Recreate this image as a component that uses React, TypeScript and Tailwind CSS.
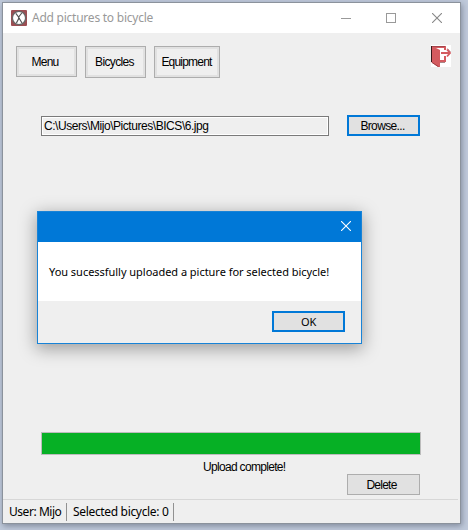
import type { ReactNode } from 'react';

const sans = "font-['Liberation_Sans',Arial,sans-serif] text-[12px] leading-[14px] text-black whitespace-pre";
const ui = "font-['Noto_Sans','Open_Sans',sans-serif] whitespace-pre";

function ToolButton({ className, children }: { className: string; children: ReactNode }) {
  return (
    <button className={`${sans} shrink-0 border border-[#adadad] bg-[#efefef] shadow-[inset_0_0_0_2px_#e1e1e1] ${className}`}>
      {children}
    </button>
  );
}

function AppIcon() {
  return (
    <svg width="16" height="16" viewBox="0 0 16 16" className="shrink-0">
      <rect width="16" height="16" rx="1" fill="#9c4d52" />
      <circle cx="8" cy="8" r="6.6" fill="#fff" stroke="#666" strokeWidth="1.3" />
      <path d="M4.8 3.4 7.6 7 10.8 3M8 8 5.4 13M8 8l3 5" fill="none" stroke="#555" strokeWidth="1.2" />
      <path d="M7.8 6.5v3" stroke="#555" />
    </svg>
  );
}

function ExitIcon() {
  return (
    <svg width="20" height="22" viewBox="0 0 20 22" className="shrink-0">
      <rect width="20" height="22" fill="#fff" />
      <path d="M0 1h15v4h-2V3H5l4 2v17H7L0 17z" fill="#d45b60" />
      <path d="M0 1.5h14" stroke="#a5444a" />
      <path d="M.5 1v16" stroke="#38191b" />
      <path d="M1 17.5 7.5 21.7" stroke="#8c3439" strokeWidth=".8" />
      <path d="M9 16h5v-5" fill="none" stroke="#d45b60" strokeWidth="2" />
      <path d="M9 17.5h5" stroke="#a88789" />
      <path d="M10 8h8" stroke="#d45b60" strokeWidth="2" />
      <path d="M16 4.5 19 8l-3 3.5" fill="none" stroke="#d45b60" strokeWidth="1.8" />
      <path d="m16.5 3.5 3 3.5" stroke="#934247" strokeWidth=".6" />
    </svg>
  );
}

function Cross({ color }: { color: string }) {
  return (
    <svg width="10" height="10" viewBox="0 0 10 10" className="shrink-0">
      <path d="m0 0 10 10M10 0 0 10" stroke={color} strokeWidth="1.1" />
    </svg>
  );
}

function TitleBar() {
  return (
    <header className="flex h-[30px] shrink-0 items-center bg-white pl-2 pr-[18px]">
      <AppIcon />
      <h1 className={`${ui} ml-[5px] text-[12px] tracking-[-0.24px] text-[#999]`}>Add pictures to bicycle</h1>
      <div className="ml-auto flex items-center gap-[35px]">
        <span className="h-px w-[10px] bg-[#999]" />
        <span className="h-[10px] w-[10px] border border-[#999]" />
        <span className="ml-[1px]"><Cross color="#888" /></span>
      </div>
    </header>
  );
}

function MessageDialog() {
  return (
    <section className="absolute left-[34px] top-[208px] flex h-[133px] w-[325px] flex-col border border-[#1883d7] bg-[#efefef] shadow-[0_4px_16px_1px_rgba(0,0,0,0.34)]">
      <div className="flex h-[30px] shrink-0 items-center justify-end bg-[#0078d7] pb-[2px] pr-[10px]">
        <Cross color="#fff" />
      </div>
      <div className="flex h-[59px] shrink-0 items-center bg-white pl-[11px] pt-[2px]">
        <p className={`${ui} text-[11px] tracking-[-0.03px] text-black`}>You sucessfully uploaded a picture for selected bicycle!</p>
      </div>
      <div className="flex justify-end pr-4 pt-[10px]">
        <button className={`${ui} h-[21px] w-[73px] border-2 border-[#0078d7] bg-[#e1e1e1] text-[11px] leading-[17px] tracking-[-0.3px] text-black`}>OK</button>
      </div>
    </section>
  );
}

export default function App() {
  return (
    <div className="h-[530px] w-[468px] overflow-hidden bg-[#c0cadb] pl-[2px] pt-[2px]">
      <main className="relative flex h-[522px] w-[459px] flex-col border border-[#8b929c] bg-[#efefef] shadow-[1px_2px_6px_rgba(40,50,70,0.42)]">
        <TitleBar />
        <nav className="flex h-[45px] shrink-0 items-start pl-[13px] pr-[9px] pt-3">
          <div className="mt-[1px] flex items-start gap-2">
            <ToolButton className="h-[31px] w-[61px] pr-[3px] tracking-[-0.8px]">Menu</ToolButton>
            <ToolButton className="h-8 w-[61px] pr-[2px] tracking-[-0.65px]">Bicycles</ToolButton>
            <ToolButton className="h-8 w-[66px] pr-[1px] tracking-[-0.8px]">Equipment</ToolButton>
          </div>
          <div className="ml-auto"><ExitIcon /></div>
        </nav>
        <div className="mt-[37px] flex items-center gap-[18px] pl-[38px]">
          <div className={`${sans} mt-[1px] h-[20px] w-[288px] border border-[#7a7a7a] pl-[2px] pt-[2px] tracking-[-0.45px] shadow-[inset_0_0_0_1px_#fff]`}>C:\Users\Mijo\Pictures\BICS\6.jpg</div>
          <button className={`${sans} h-[21px] w-[73px] border-2 border-[#0078d7] bg-[#e1e1e1] pr-[2px] tracking-[-0.65px]`}>Browse...</button>
        </div>
        <div className="ml-[38px] mt-auto h-[23px] w-[380px] shrink-0 border border-[#bcbcbc] bg-[#06b025]" />
        <p className={`${sans} ml-[200px] mt-[5px] tracking-[-0.68px]`}>Upload complete!</p>
        <button className={`${sans} ml-[344px] h-[21px] w-[73px] shrink-0 border border-[#adadad] bg-[#e1e1e1] pr-[4px] tracking-[-0.75px]`}>Delete</button>
        <footer className={`${ui} mr-[2px] mt-[4px] flex h-[24px] shrink-0 items-center border-t border-[#d7d7d7] pl-[6px] text-[12px] text-black`}>
          <span className="w-[57px] tracking-[-0.45px]">User: Mijo</span>
          <span className="h-[18px] w-px bg-[#919191]" />
          <span className="ml-[6px] w-[100px] tracking-[-0.33px]">Selected bicycle: 0</span>
          <span className="h-[18px] w-px bg-[#919191]" />
        </footer>
        <MessageDialog />
      </main>
    </div>
  );
}
